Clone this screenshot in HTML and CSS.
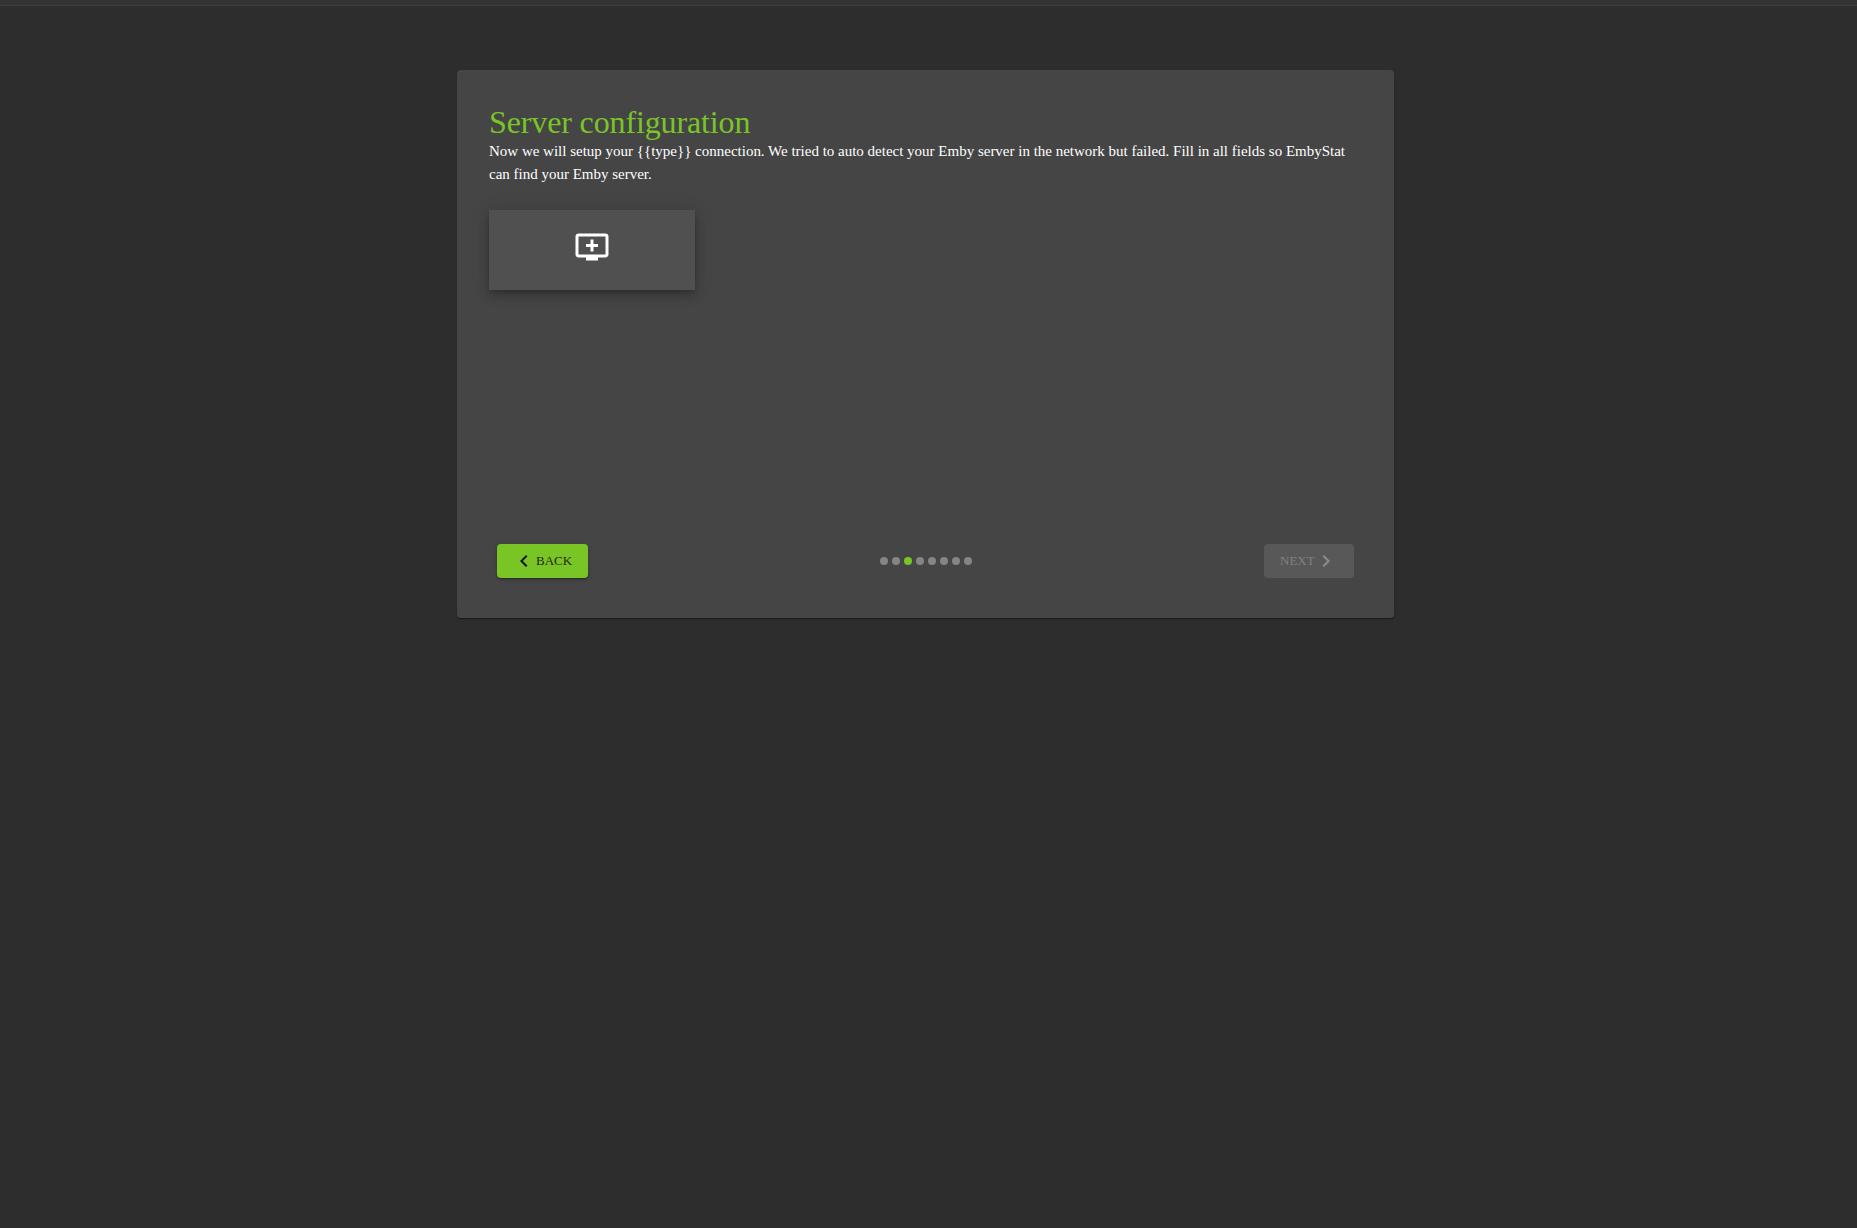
FILE: index.html
```html
<!DOCTYPE html>
<html lang="en">
<head>
<meta charset="utf-8">
<title>Server configuration</title>
<link rel="stylesheet" href="styles.css">
</head>
<body>
<div class="topbar"></div>
<main class="page">
  <section class="card">
    <div class="content">
      <h1 class="title">Server configuration</h1>
      <p class="intro">Now we will setup your {{type}} connection. We tried to auto detect your Emby server in the network but failed. Fill in all fields so EmbyStat can find your Emby server.</p>
      <div class="tile">
        <svg class="tile-icon" viewBox="0 0 24 24"><path d="M21 3H3c-1.11 0-2 .89-2 2v12c0 1.1.89 2 2 2h5v2h8v-2h5c1.1 0 1.99-.9 1.99-2L23 5c0-1.11-.9-2-2-2zm0 14H3V5h18v12zm-5-7v2h-3v3h-2v-3H8v-2h3V7h2v3h3z"/></svg>
      </div>
    </div>
    <footer class="stepper">
      <button class="btn btn-back"><svg class="chev" viewBox="0 0 24 24"><path d="M15.41 7.41 14 6l-6 6 6 6 1.41-1.41L10.83 12z"/></svg><span>BACK</span></button>
      <div class="dots">
        <i class="dot"></i><i class="dot"></i><i class="dot active"></i><i class="dot"></i><i class="dot"></i><i class="dot"></i><i class="dot"></i><i class="dot"></i>
      </div>
      <button class="btn btn-next" disabled><span>NEXT</span><svg class="chev" viewBox="0 0 24 24"><path d="M10 6 8.59 7.41 13.17 12l-4.58 4.59L10 18l6-6z"/></svg></button>
    </footer>
  </section>
</main>
</body>
</html>
```
FILE: styles.css
```css
* { box-sizing: border-box; }
html, body { margin: 0; height: 100%; }
body {
  background: #2d2d2d;
  font-family: "Liberation Serif", "Times New Roman", serif;
  color: #fff;
  overflow: hidden;
}
.topbar {
  height: 6px;
  background: #333;
  border-bottom: 1px solid #3c3c3c;
}
.page {
  display: flex;
  justify-content: center;
  padding: 64px 6px 0 0;
}
.card {
  width: 937px;
  height: 548px;
  background: #454545;
  border-radius: 4px;
  box-shadow: 0 2px 1px -1px rgba(0,0,0,.2), 0 1px 1px 0 rgba(0,0,0,.14), 0 1px 3px 0 rgba(0,0,0,.12);
  display: flex;
  flex-direction: column;
  justify-content: space-between;
}
.content { padding: 34px 32px 0; }
.title {
  margin: 0;
  font-size: 32px;
  font-weight: 400;
  letter-spacing: -.13px;
  line-height: 36px;
  color: #7ac526;
}
.intro {
  margin: 0;
  font-size: 15px;
  letter-spacing: -.005px;
  line-height: 23px;
  color: #fff;
}
.tile {
  width: 206px;
  height: 80px;
  margin-top: 24px;
  background: #505050;
  display: flex;
  justify-content: center;
  padding-top: 19px;
  box-shadow: 0 3px 5px -1px rgba(0,0,0,.2), 0 6px 10px 0 rgba(0,0,0,.14), 0 1px 18px 0 rgba(0,0,0,.12);
}
.tile-icon { width: 36px; height: 36px; fill: #fff; display: block; }
.stepper {
  display: flex;
  justify-content: space-between;
  align-items: center;
  padding: 0 40px 40px;
}
.btn {
  height: 34px;
  width: 91px;
  border: 0;
  border-radius: 4px;
  font-family: inherit;
  font-size: 13px;
  display: flex;
  align-items: center;
  padding: 0 16px;
}
.btn-back {
  background: #7ac526;
  color: #1c2a0c;
  padding-left: 15px;
  box-shadow: 0 3px 1px -2px rgba(0,0,0,.2), 0 2px 2px 0 rgba(0,0,0,.14), 0 1px 5px 0 rgba(0,0,0,.12);
}
.btn-next { background: #585858; color: #808080; width: 90px; }
.chev { width: 24px; height: 24px; fill: currentColor; display: block; flex: none; }
.btn-back .chev { fill: #111; }
.btn-next .chev { fill: #8c8c8c; margin-left: -1px; }
.dots { display: flex; gap: 4px; margin-right: 1px; }
.dot { width: 8px; height: 8px; border-radius: 50%; background: #858585; display: block; }
.dot.active { background: #7ac526; }
```
